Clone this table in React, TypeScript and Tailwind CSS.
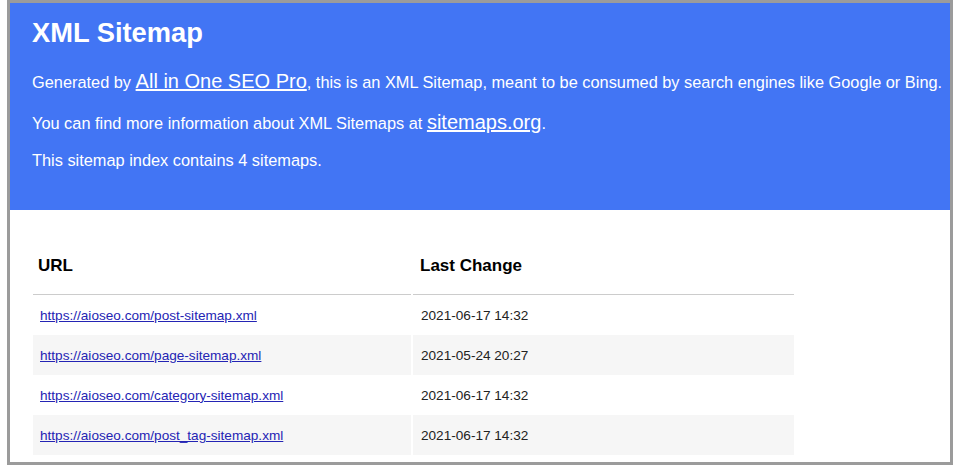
const rows = [
  { url: "https://aioseo.com/post-sitemap.xml", date: "2021-06-17 14:32" },
  { url: "https://aioseo.com/page-sitemap.xml", date: "2021-05-24 20:27" },
  { url: "https://aioseo.com/category-sitemap.xml", date: "2021-06-17 14:32" },
  { url: "https://aioseo.com/post_tag-sitemap.xml", date: "2021-06-17 14:32" },
];

export default function App() {
  return (
    <div className="w-[960px] h-[470px] bg-white font-['Liberation_Sans',Arial,sans-serif]">
      <div className="ml-[7px] w-[946px] h-[465px] border-[3px] border-[#9b9b9b] overflow-hidden bg-white">
        {/* header */}
        <div className="bg-[#4275f4] text-white h-[207px] pl-[22px] pt-[14px]">
          <h1 className="text-[27.3px] leading-[32px] font-bold">XML Sitemap</h1>
          <p className="mt-[20px] text-[16.35px] leading-[24px] whitespace-nowrap">
            Generated by{" "}
            <a href="#" className="underline text-[20px] text-white">
              All in One SEO Pro
            </a>
            , this is an XML Sitemap, meant to be consumed by search engines like Google or Bing.
          </p>
          <p className="mt-[16px] text-[16.35px] leading-[24px]">
            You can find more information about XML Sitemaps at{" "}
            <a href="#" className="underline text-[20px] text-white">
              sitemaps.org
            </a>
            .
          </p>
          <p className="mt-[13px] text-[16.35px] leading-[24px]">
            This sitemap index contains 4 sitemaps.
          </p>
        </div>

        {/* table */}
        <table className="mt-[27px] ml-[21px] border-separate border-spacing-x-[2px] border-spacing-y-0 text-left">
          <thead>
            <tr>
              <th className="w-[378px] h-[58px] pl-[5px] border-b border-[#cccccc] text-[17px] font-bold text-black align-middle">
                URL
              </th>
              <th className="w-[381px] h-[58px] pl-[7px] border-b border-[#cccccc] text-[17px] font-bold text-black align-middle">
                Last Change
              </th>
            </tr>
          </thead>
          <tbody>
            {rows.map((r, i) => (
              <tr key={r.url} className={i % 2 === 1 ? "bg-[#f6f6f6]" : "bg-white"}>
                <td className="h-[40px] pt-[2px] pl-[7px] text-[13.6px]">
                  <a href="#" className="underline text-[#2424b4]">
                    {r.url}
                  </a>
                </td>
                <td className="h-[40px] pt-[2px] pl-[8px] text-[13.6px] text-[#222222]">{r.date}</td>
              </tr>
            ))}
          </tbody>
        </table>
      </div>
    </div>
  );
}
